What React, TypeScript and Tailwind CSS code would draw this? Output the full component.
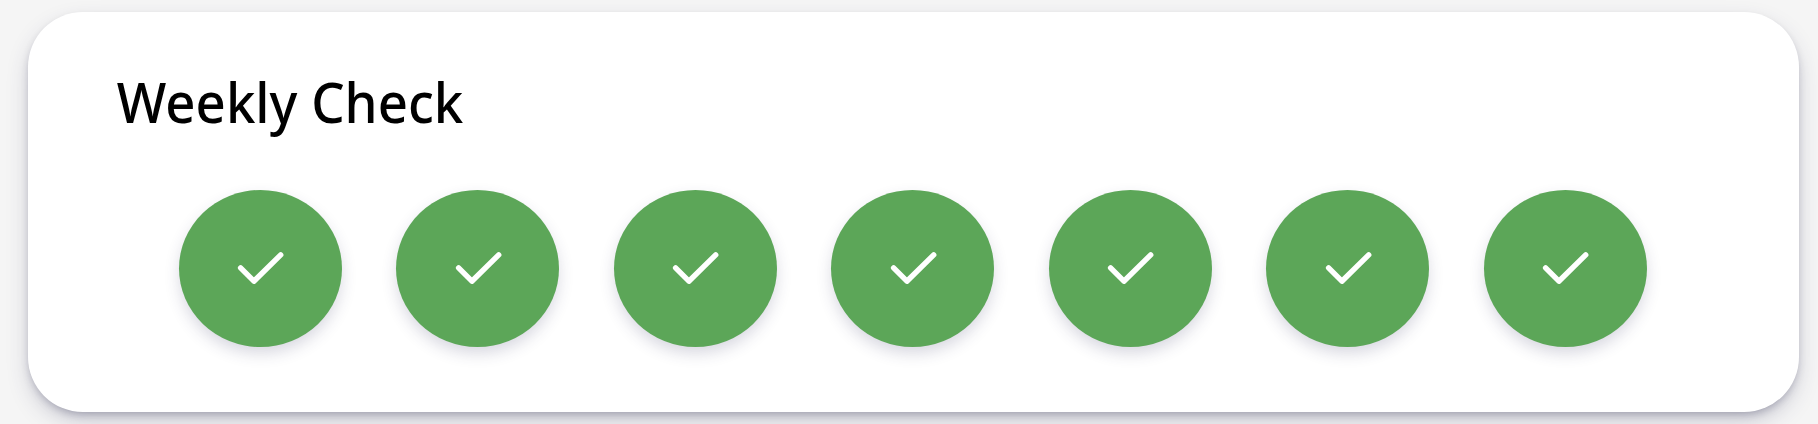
const days = ['Sun', 'Mon', 'Tue', 'Wed', 'Thu', 'Fri', 'Sat'];

function DayCheck() {
  return (
    <li className="flex h-[157px] w-[163px] items-center justify-center rounded-[50%] bg-[#5ca658] shadow-[0_7px_16px_-1px_rgba(50,50,93,0.2)]">
      <svg className="h-[34px] w-[48px]" viewBox="0 0 48 34" fill="none" aria-hidden="true">
        <path
          d="M4.6 15.8L17.9 29.2L44.7 2.9"
          stroke="white"
          strokeWidth="5.4"
          strokeLinecap="round"
          strokeLinejoin="round"
        />
      </svg>
    </li>
  );
}

export default function App() {
  return (
    <main className="h-[424px] overflow-hidden bg-[#f5f5f5] pt-3 pr-[19px] pl-7">
      <section className="h-[400px] rounded-[55px] bg-white pt-[59px] shadow-[0_10px_24px_-4px_rgba(50,50,93,0.28),0_4px_10px_-3px_rgba(20,20,50,0.3)]">
        <h1 className="origin-left scale-x-[0.925] pl-[96px] font-['Noto_Sans',sans-serif] text-[57px] leading-[60px] font-medium whitespace-nowrap text-black">
          Weekly Check
        </h1>
        <ul className="mt-[59px] flex gap-[54.45px] pl-[150.95px]">
          {days.map((day) => (
            <DayCheck key={day} />
          ))}
        </ul>
      </section>
    </main>
  );
}
